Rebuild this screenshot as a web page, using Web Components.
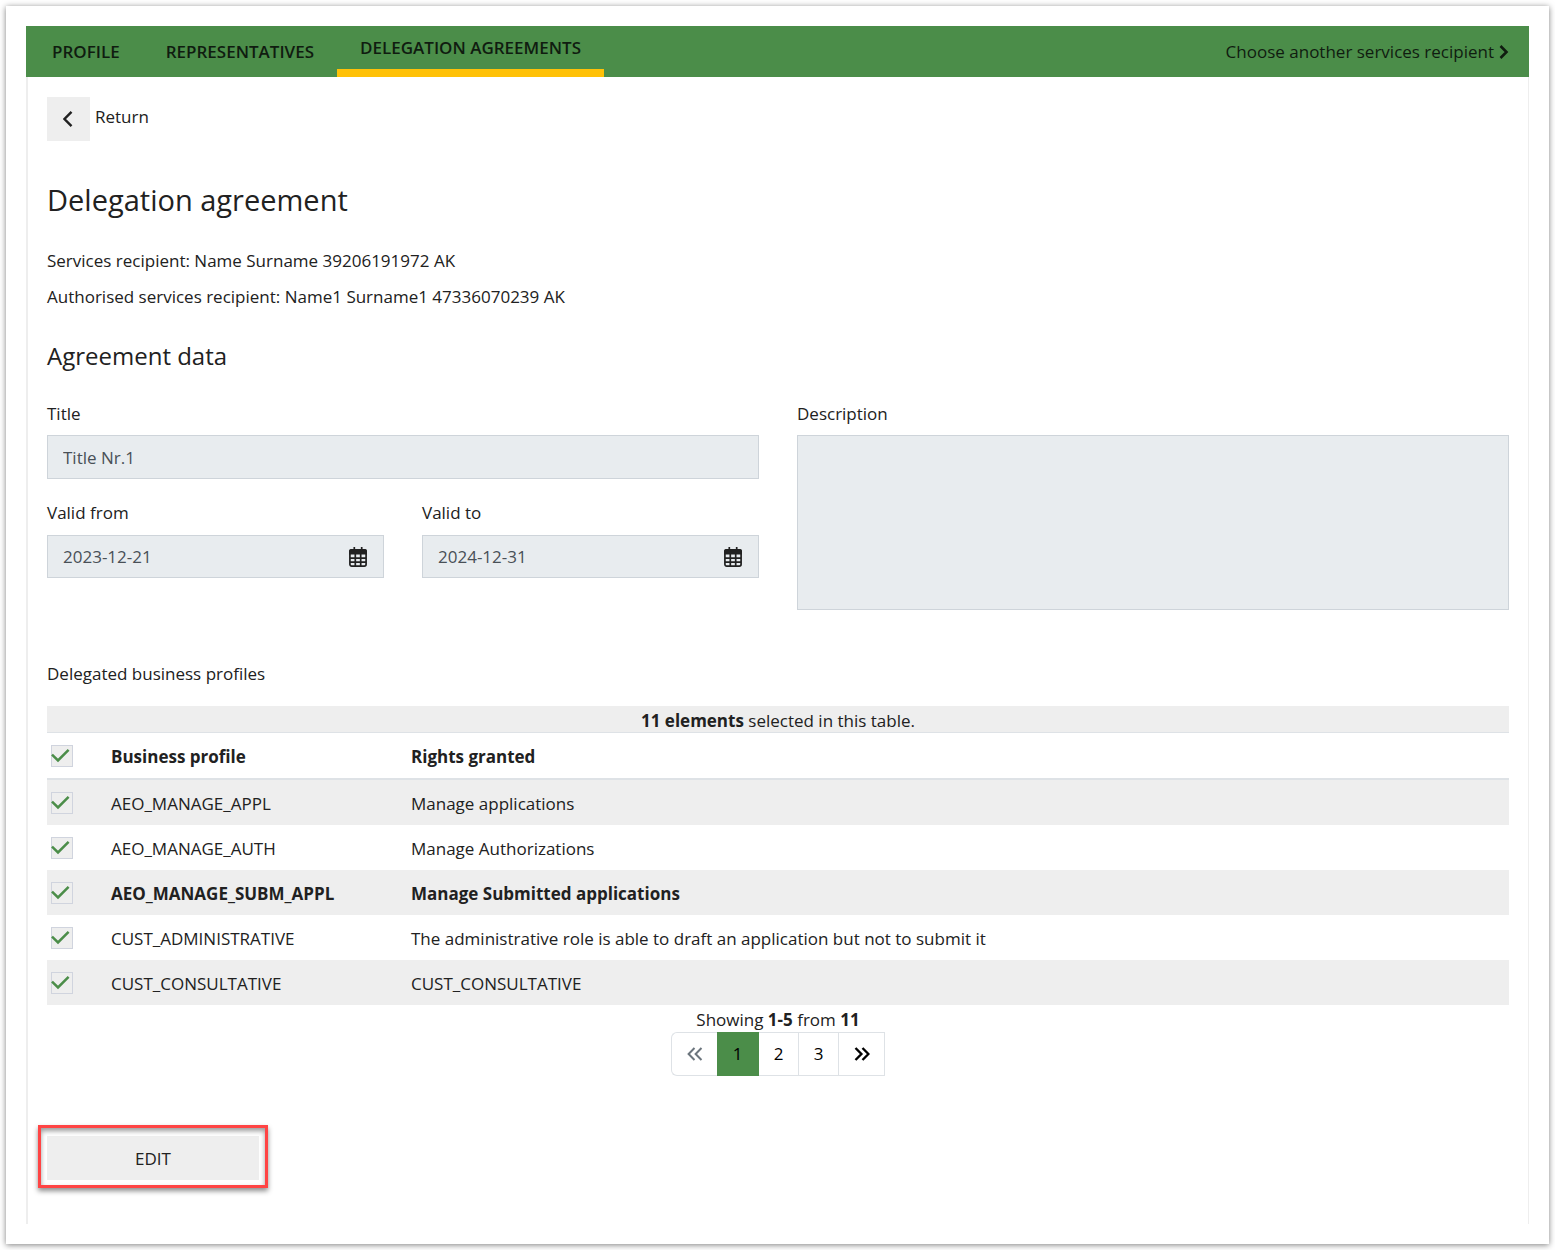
<!DOCTYPE html>
<html lang="en">
<head>
<meta charset="utf-8">
<title>Delegation agreement</title>
<style>
  :root {
    --green: #4b8d49;
    --amber: #ffc107;
    --grey: #eeeeee;
    --line: #dee2e6;
    --ink: #212121;
  }
  body {
    margin: 0;
    background: #fff;
    color: var(--ink);
    font: 17px/26px "Open Sans", "Segoe UI", sans-serif;
  }
</style>
</head>
<body>
<app-card>
  <nav-bar slot="nav">
    <nav-tab>PROFILE</nav-tab>
    <nav-tab>REPRESENTATIVES</nav-tab>
    <nav-tab active>DELEGATION AGREEMENTS</nav-tab>
    <span slot="end">Choose another services recipient</span>
  </nav-bar>
  <return-link>Return</return-link>
  <page-heading>
    Delegation agreement
    <span slot="line1">Services recipient: Name Surname 39206191972 AK</span>
    <span slot="line2">Authorised services recipient: Name1 Surname1 47336070239 AK</span>
  </page-heading>
  <agreement-form></agreement-form>
  <profile-table></profile-table>
  <page-pager></page-pager>
  <edit-action>EDIT</edit-action>
</app-card>

<script>
const define = (name, html, setup) => {
  const template = document.createElement("template");
  template.innerHTML = "<style>*,*::before,*::after{box-sizing:border-box}button,input,textarea{font:inherit;color:inherit;margin:0;border-radius:0}svg{display:block}</style>" + html;
  customElements.define(name, class extends HTMLElement {
    constructor() {
      super();
      this.attachShadow({ mode: "open" }).append(template.content.cloneNode(true));
    }
    connectedCallback() {
      if (setup && !this.ready) { this.ready = true; setup(this, this.shadowRoot); }
    }
  });
};

define("app-card", `
  <style>
    :host { display: block; margin: 6px; padding: 20px; background: #fff; box-shadow: 0 1px 6px rgba(0,0,0,.5); }
    main { border-left: 2px solid var(--grey); border-right: 1px solid var(--grey); padding: 20px 19px 44px; }
  </style>
  <slot name="nav"></slot>
  <main><slot></slot></main>`);

define("nav-bar", `
  <style>
    :host { display: block; background: var(--green); color: #101c10; }
    nav { display: flex; height: 51px; padding: 0 20px 0 3px; }
    .end { display: flex; align-items: center; gap: 5px; margin-left: auto; color: inherit; text-decoration: none; }
  </style>
  <nav>
    <slot></slot>
    <a class="end" href="#choose"><slot name="end"></slot>
      <svg width="10" height="16" viewBox="0 0 10 16" fill="none" stroke="currentColor" stroke-width="2.6"><path d="M1.5 2 7.5 8l-6 6"/></svg>
    </a>
  </nav>`);

define("nav-tab", `
  <style>
    :host { display: flex; font-weight: 600; }
    a { display: flex; align-items: center; padding: 0 23px; color: inherit; text-decoration: none; }
    :host([active]) a { border-bottom: 8px solid var(--amber); }
  </style>
  <a href="#tab"><slot></slot></a>`);

define("return-link", `
  <style>
    :host { display: flex; }
    a { display: flex; gap: 5px; color: inherit; text-decoration: none; line-height: 40px; }
    .box { display: grid; place-items: center; width: 43px; height: 44px; background: var(--grey); }
  </style>
  <a href="#return"><span class="box">
    <svg width="12" height="18" viewBox="0 0 12 18" fill="none" stroke="#212121" stroke-width="2.4"><path d="M8.5 1.8 1.5 9l7 7.2"/></svg>
  </span><slot></slot></a>`);

define("page-heading", `
  <style>
    :host { display: block; }
    h1 { margin: 42px 0 31px; font-size: 29px; line-height: 34px; font-weight: 400; }
    p { margin: 10px 0 0; }
  </style>
  <h1><slot></slot></h1>
  <p><slot name="line1"></slot></p>
  <p><slot name="line2"></slot></p>`);

define("form-field", `
  <style>
    :host { display: flex; flex-direction: column; }
    label { margin-bottom: 8px; }
    .box { display: flex; align-items: center; height: 44px; border: 1px solid #ced4da; background: #e8ecef; color: #495057; }
    :host([kind="date"]) label { margin-bottom: 9px; }
    :host([kind="date"]) .box { height: 43px; }
    input { flex: 1; min-width: 0; height: 100%; padding: 0 15px; border: 0; background: none; }
    button { display: block; padding: 0; margin-right: 15px; border: 0; background: none; color: var(--ink); }
    textarea { display: block; width: 100%; height: 175px; padding: 8px 15px; border: 1px solid #ced4da; background: #e8ecef; resize: none; }
  </style>
  <label for="control"></label>`, (host, root) => {
  const kind = host.getAttribute("kind");
  root.querySelector("label").textContent = host.getAttribute("label");
  if (kind === "area") {
    root.append(Object.assign(document.createElement("textarea"), { id: "control", readOnly: true }));
    return;
  }
  const box = document.createElement("div");
  box.className = "box";
  box.append(Object.assign(document.createElement("input"), { id: "control", type: "text", readOnly: true, value: host.getAttribute("value") }));
  if (kind === "date") {
    box.insertAdjacentHTML("beforeend", `<button type="button" aria-label="Open calendar">
      <svg width="20" height="20" viewBox="0 0 20 20" fill="none" stroke="currentColor" stroke-width="1.7">
        <rect x="1.9" y="2.9" width="16.2" height="16.2" rx="1.8"/>
        <path d="M1 4.2Q1 2 3.2 2h13.6Q19 2 19 4.2V7.4H1z" fill="currentColor" stroke="none"/>
        <path d="M6.3 0v4M13.7 0v4M2 11.2h16M2 15.2h16M7.3 7v12M12.7 7v12"/>
      </svg></button>`);
  }
  root.append(box);
});

define("agreement-form", `
  <style>
    :host { display: block; }
    h2 { margin: 31px 0 30px; font-size: 24px; line-height: 30px; font-weight: 400; }
    form, .dates { display: grid; grid-template-columns: 1fr 1fr; column-gap: 38px; }
    .dates { margin-top: 21px; }
  </style>
  <h2>Agreement data</h2>
  <form>
    <div>
      <form-field label="Title" value="Title Nr.1"></form-field>
      <div class="dates">
        <form-field kind="date" label="Valid from" value="2023-12-21"></form-field>
        <form-field kind="date" label="Valid to" value="2024-12-31"></form-field>
      </div>
    </div>
    <form-field kind="area" label="Description"></form-field>
  </form>`);

define("check-box", `
  <style>
    :host { display: grid; width: 22px; }
    input, svg { grid-area: 1 / 1; }
    input { appearance: none; width: 22px; height: 22px; border: 1px solid #d0d4de; background: var(--grey); }
    svg { pointer-events: none; visibility: hidden; }
    input:checked + svg { visibility: visible; }
  </style>
  <input type="checkbox" checked>
  <svg width="22" height="22" viewBox="0 0 22 22" fill="none" stroke="#4b8d49" stroke-width="2.5"><path d="M1 9.6 7 15.4 17.6 4.8"/></svg>`,
  (host, root) => root.querySelector("input").setAttribute("aria-label", host.getAttribute("label")));

define("profile-table", `
  <style>
    :host { display: block; }
    p { margin: 51px 0 19px; }
    .status { height: 27px; border-bottom: 1px solid var(--line); background: var(--grey); text-align: center; line-height: 29px; }
    table { width: 100%; border-collapse: separate; border-spacing: 0; table-layout: fixed; text-align: left; }
    col.tick { width: 64px; }
    col.name { width: 300px; }
    th, td { height: 45px; padding: 2px 0 0; }
    thead th { height: 47px; border-bottom: 2px solid var(--line); }
    th:first-child, td:first-child { padding: 0 0 0 4px; }
    tbody tr:nth-child(odd) { background: var(--grey); }
    tr.strong { font-weight: 700; }
  </style>
  <p>Delegated business profiles</p>
  <div class="status"><b>11 elements</b> selected in this table.</div>
  <table>
    <colgroup><col class="tick"><col class="name"><col></colgroup>
    <thead><tr><th><check-box label="Select all"></check-box></th><th>Business profile</th><th>Rights granted</th></tr></thead>
    <tbody></tbody>
  </table>`, (host, root) => {
  const rows = [
    ["AEO_MANAGE_APPL", "Manage applications"],
    ["AEO_MANAGE_AUTH", "Manage Authorizations"],
    ["AEO_MANAGE_SUBM_APPL", "Manage Submitted applications", "strong"],
    ["CUST_ADMINISTRATIVE", "The administrative role is able to draft an application but not to submit it"],
    ["CUST_CONSULTATIVE", "CUST_CONSULTATIVE"],
  ];
  root.querySelector("tbody").innerHTML = rows.map(([name, rights, cls = ""]) =>
    `<tr class="${cls}"><td><check-box label="${name}"></check-box></td><td>${name}</td><td>${rights}</td></tr>`).join("");
});

define("page-pager", `
  <style>
    :host { display: flex; flex-direction: column; align-items: center; }
    .info { line-height: 29px; height: 27px; }
    nav { display: flex; height: 44px; color: #000; }
    button { display: grid; place-items: center; min-width: 40px; padding: 0; border: 1px solid var(--line); border-left: 0; background: #fff; }
    .edge { min-width: 46px; }
    .first { border-left: 1px solid var(--line); border-right: 0; border-radius: 6px 0 0 6px; color: #6c757d; }
    .current { min-width: 42px; border-color: var(--green); background: var(--green); }
  </style>
  <div class="info">Showing <b>1-5</b> from <b>11</b></div>
  <nav aria-label="Pages">
    <button type="button" class="edge first" aria-label="First page"><svg width="16" height="14" viewBox="0 0 16 14" fill="none" stroke="currentColor" stroke-width="2"><path d="M7.5 1 1.6 7l5.9 6M14.5 1 8.6 7l5.9 6"/></svg></button>
    <button type="button" class="current">1</button>
    <button type="button">2</button>
    <button type="button">3</button>
    <button type="button" class="edge" aria-label="Last page"><svg width="16" height="14" viewBox="0 0 16 14" fill="none" stroke="currentColor" stroke-width="2.4"><path d="M1.5 1 7.4 7l-5.9 6M8.5 1l5.9 6-5.9 6"/></svg></button>
  </nav>`);

define("edit-action", `
  <style>
    :host { display: block; position: relative; width: 212px; margin-top: 60px; }
    button { display: block; width: 100%; height: 44px; padding: 2px 0 0; border: 0; background: var(--grey); }
    .mark { position: absolute; inset: -11px -9px -8px; border: 3px solid #ff4444; pointer-events: none;
      box-shadow: 0 3px 5px rgba(0,0,0,.45), inset 0 3px 5px rgba(0,0,0,.4); }
  </style>
  <button type="button"><slot></slot></button>
  <div class="mark"></div>`);
</script>
</body>
</html>
